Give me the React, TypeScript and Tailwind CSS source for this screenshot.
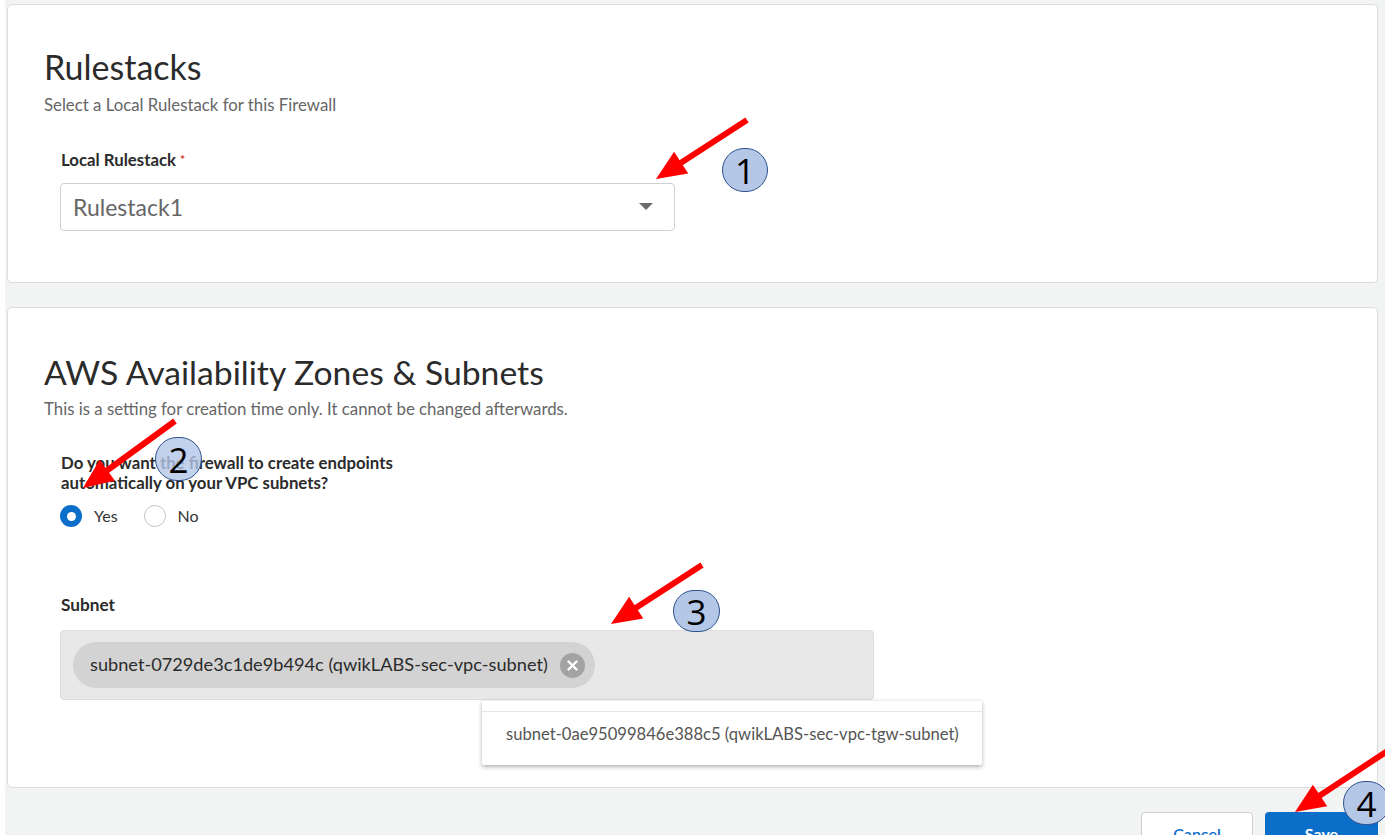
import React from 'react';

type Pt = [number, number];

// red call-out arrows drawn on top of the form
const arrows: { from: Pt; to: Pt }[] = [
  { from: [747, 120], to: [656, 179] },
  { from: [175, 421], to: [83, 488] },
  { from: [702, 565], to: [611, 624] },
  { from: [1392, 748], to: [1295, 812] },
];

const badges = [
  { n: '1', x: 722, y: 148, w: 46, h: 44, fade: false },
  { n: '2', x: 155, y: 437, w: 47, h: 44, fade: true },
  { n: '3', x: 673, y: 590, w: 47, h: 42, fade: false },
  { n: '4', x: 1343, y: 781, w: 47, h: 44, fade: false },
];

const Arrow: React.FC<{ from: Pt; to: Pt }> = ({ from, to }) => {
  const [x1, y1] = from;
  const [x2, y2] = to;
  const len = Math.hypot(x2 - x1, y2 - y1);
  const ux = (x2 - x1) / len;
  const uy = (y2 - y1) / len;
  const head = 30;
  const half = 13;
  const bx = x2 - ux * head;
  const by = y2 - uy * head;
  const pts = `${x2},${y2} ${bx - uy * half},${by + ux * half} ${bx + uy * half},${by - ux * half}`;
  return (
    <g>
      <line x1={x1} y1={y1} x2={bx + ux * 2} y2={by + uy * 2} stroke="#ff0000" strokeWidth={6} />
      <polygon points={pts} fill="#ff0000" />
    </g>
  );
};

const Radio: React.FC<{ checked?: boolean; label: string }> = ({ checked, label }) => (
  <label className="flex items-center gap-[12px]">
    {checked ? (
      <span className="w-[22px] h-[22px] rounded-full bg-[#0b6fca] flex items-center justify-center">
        <span className="w-[9px] h-[9px] rounded-full bg-white" />
      </span>
    ) : (
      <span className="w-[22px] h-[22px] rounded-full border border-[#c4c4c4] bg-white" />
    )}
    <span className="text-[16px] text-[#333]">{label}</span>
  </label>
);

export default function App() {
  return (
    <div className="relative w-full h-[835px] overflow-hidden bg-white font-['Lato',sans-serif]">
      <div className="ml-[5px] h-full bg-[#f2f3f3] pt-[4px] pl-[2px] pr-[7px]">
        {/* Rulestacks */}
        <div className="h-[279px] bg-white border border-[#dcdcdc] rounded-[5px] pt-[42px] pl-[36px]">
          <h2 className="text-[34px] leading-[40px] text-[#2b2b2b]">Rulestacks</h2>
          <p className="mt-[8px] text-[16.8px] leading-[20px] text-[#666]">Select a Local Rulestack for this Firewall</p>
          <div className="pl-[16px]">
            <div className="mt-[35px] pl-px text-[16.8px] leading-[20px] font-bold text-[#2b2b2b]">
              Local Rulestack <span className="text-[#e02b2b] text-[12px] align-top">*</span>
            </div>
            <div className="mt-[13px] w-[615px] h-[48px] border border-[#d0d0d0] rounded-[4px] flex items-center justify-between pl-[12px] pr-[21px]">
              <span className="text-[23px] text-[#666]">Rulestack1</span>
              <svg width="14" height="8" viewBox="0 0 14 8">
                <polygon points="0,0 14,0 7,7" fill="#6b6b6b" />
              </svg>
            </div>
          </div>
        </div>

        {/* Zones & subnets */}
        <div className="mt-[24px] h-[481px] bg-white border border-[#dcdcdc] rounded-[5px] pt-[44px] pl-[36px]">
          <h2 className="text-[33.7px] leading-[40px] text-[#2b2b2b]">AWS Availability Zones &amp; Subnets</h2>
          <p className="mt-[7px] text-[16.8px] leading-[20px] text-[#666]">This is a setting for creation time only. It cannot be changed afterwards.</p>
          <div className="pl-[16px]">
            <div className="mt-[34px] pl-px text-[16.8px] leading-[20px] font-bold text-[#2b2b2b]">
              Do you want the firewall to create endpoints
              <br />
              automatically on your VPC subnets?
            </div>
            <div className="mt-[11px] flex items-center gap-[26px]">
              <Radio checked label="Yes" />
              <Radio label="No" />
            </div>
            <div className="mt-[67px] pl-px text-[17.2px] leading-[20px] font-bold text-[#2b2b2b]">Subnet</div>
            <div className="relative mt-[15px] w-[814px] h-[70px] bg-[#e8e8e8] border border-[#dedede] rounded-[4px] flex items-center pl-[12px]">
              <div className="h-[46px] rounded-full bg-[#d3d3d3] flex items-center pl-[17px] pr-[10px] gap-[12px]">
                <span className="text-[18.2px] text-[#2b2b2b]">subnet-0729de3c1de9b494c (qwikLABS-sec-vpc-subnet)</span>
                <span className="w-[25px] h-[25px] rounded-full bg-[#a3a3a3] flex items-center justify-center">
                  <svg width="11" height="11" viewBox="0 0 11 11">
                    <path d="M1.5 1.5 L9.5 9.5 M9.5 1.5 L1.5 9.5" stroke="#ffffff" strokeWidth="2.4" strokeLinecap="round" />
                  </svg>
                </span>
              </div>
              <div className="absolute left-[421px] top-[69px] w-[500px] h-[65px] bg-white shadow-[0_2px_4px_rgba(0,0,0,0.3)] rounded-[2px] border-t border-[#eeeeee] flex flex-col">
                <div className="h-[11px] border-b border-[#e6e6e6]" />
                <div className="flex-1 flex items-center pl-[24px] pb-[8px] text-[16.6px] text-[#555]">
                  subnet-0ae95099846e388c5 (qwikLABS-sec-vpc-tgw-subnet)
                </div>
              </div>
            </div>
          </div>
        </div>

        {/* Footer actions */}
        <div className="mt-[24px] flex justify-end gap-[12px]">
          <button className="w-[112px] h-[44px] bg-white border border-[#cfcfcf] rounded-[4px] text-[16px] font-semibold text-[#0b6fca]">
            Cancel
          </button>
          <button className="w-[113px] h-[44px] bg-[#0b6fca] rounded-[4px] text-[16px] font-bold text-white">Save</button>
        </div>
      </div>

      {/* annotation overlay */}
      <svg className="absolute inset-0 pointer-events-none" width="1385" height="835">
        {arrows.map((a, i) => (
          <Arrow key={i} from={a.from} to={a.to} />
        ))}
      </svg>
      {badges.map((b) => (
        <div
          key={b.n}
          className={`absolute rounded-full border-[1.5px] border-[#2f528f] flex items-center justify-center text-[35px] leading-none text-black font-['Open_Sans',sans-serif] ${
            b.fade ? 'bg-[#b4c7e7]/80' : 'bg-[#b4c7e7]'
          }`}
          style={{ left: b.x, top: b.y, width: b.w, height: b.h }}
        >
          {b.n}
        </div>
      ))}
    </div>
  );
}
